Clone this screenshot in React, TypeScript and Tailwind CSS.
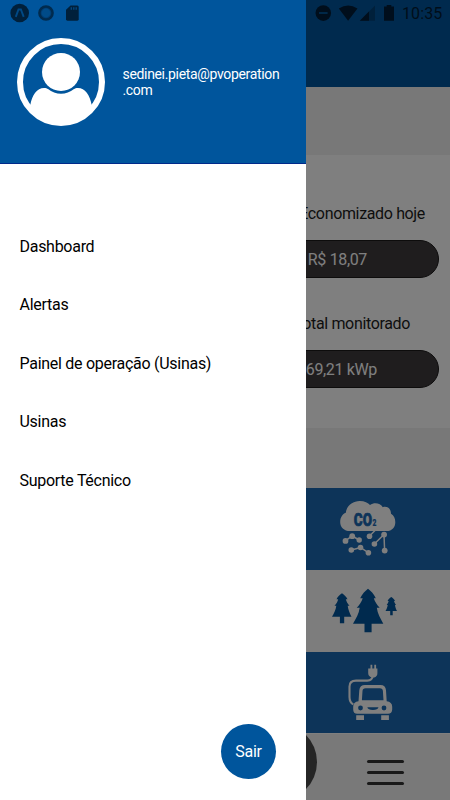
import React from 'react';

const menuItems = ['Dashboard', 'Alertas', 'Painel de operação (Usinas)', 'Usinas', 'Suporte Técnico'];

const stats = [
  { id: 'saved', label: 'Economizado hoje', value: 'R$ 18,07', labelPad: 'pr-[25px]', valuePad: 'pr-[71px]' },
  { id: 'total', label: 'Total monitorado', value: '69,21 kWp', labelPad: 'pr-[40px]', valuePad: 'pr-[61px]' },
];

const AvatarIcon: React.FC = () => (
  <svg width="88" height="88" viewBox="0 0 88 88" className="shrink-0">
    <circle cx="44" cy="44" r="41" fill="none" stroke="#fff" strokeWidth="6" />
    <circle cx="44" cy="34" r="19" fill="#fff" />
    <path d="M13.3 67C15 57 20 50 27 50C29 50 30 50.4 31 51.1C38.5 57.4 49.5 57.4 57 51.1C58 50.4 59 50 61 50C68 50 73 57 74.7 67C70 80 57 86 44 86S18 80 13.3 67Z" fill="#fff" />
  </svg>
);

const NotificationIcons: React.FC = () => (
  <svg width="90" height="26" viewBox="0 0 90 26" className="block">
    <circle cx="19.7" cy="13" r="9.3" fill="#00203b" />
    <path d="M15.8 16.9L18.5 9.5H20.9L23.7 16.9" fill="none" stroke="#004985" strokeWidth="1.9" />
    <circle cx="46" cy="13" r="6.6" fill="#003e73" stroke="#002b4e" strokeWidth="2.5" />
    <circle cx="46" cy="13" r="4.4" fill="#004b88" />
    <path d="M70.5 5.5H77.4Q78.7 5.5 78.7 7V19.3Q78.7 20.7 77.3 20.7H67.5Q66 20.7 66 19.3V9.8Z" fill="#00203b" />
    <path d="M71.3 7.2V9.7M73.8 7.2V9.7M76.2 7.2V9.7" stroke="#004985" strokeWidth="1.3" />
  </svg>
);

const SystemIcons: React.FC = () => (
  <svg width="82" height="26" viewBox="314 0 82 26" className="block">
    <circle cx="323.3" cy="13.1" r="7.8" fill="#001d38" />
    <rect x="319" y="12" width="8.6" height="2" fill="#005090" />
    <path d="M338.8 8.6Q348.2 2.2 357.5 8.6L348.1 20.7Z" fill="#001d38" />
    <path d="M375 5.5V20.7H359.8Z" fill="#004177" />
    <path d="M369 11.5V20.7H359.8Z" fill="#001d38" />
    <path d="M386.7 5H391.3V6.4H394V20.8H384V6.4H386.7Z" fill="#001d38" />
  </svg>
);

const CarbonIcon: React.FC = () => (
  <svg width="90" height="75" viewBox="0 0 90 75" className="block">
    <path d="M25 41C19 41 15.2 37.3 15.2 32.2C15.2 27.5 17.5 24 20.8 22.8C21.5 15.8 27.6 11 34.8 11C39.5 11 43.2 12.8 45 15C49.5 11.8 55.5 13.3 57.8 17.2C62.5 15.8 66 19 66 23.7C69 25.3 70.3 28.5 70.3 32.2C70.3 37.3 67.2 41 61.5 41Z" fill="#fff" />
    <text transform="translate(28.8 36.2) scale(.71 1)" fontFamily="Roboto, sans-serif" fontWeight="900" fill="#1a68b2" stroke="#1a68b2">
      <tspan fontSize="19" strokeWidth="0.7">CO</tspan>
      <tspan dx="0.8" fontSize="9.5" strokeWidth="0.2">2</tspan>
    </text>
    <g fill="none" stroke="#fff" strokeWidth="1.5">
      <path d="M20.3 50.8L27.2 46L34.2 50" />
      <path d="M26.5 60L35.5 57.5L43.3 62.7" />
      <path d="M44.5 46L50.5 40" />
      <path d="M49.3 54L59 44.5L59.6 60.5" />
    </g>
    <g fill="#fff">
      <circle cx="20.5" cy="50.9" r="2.9" />
      <circle cx="27.2" cy="46.2" r="2.9" />
      <circle cx="34.2" cy="50" r="2.7" />
      <circle cx="26.3" cy="60" r="2.8" />
      <circle cx="35.5" cy="57.5" r="2.8" />
      <circle cx="43.4" cy="62.8" r="2.8" />
      <circle cx="44.5" cy="46.2" r="2.8" />
      <circle cx="49.4" cy="54" r="2.8" />
      <circle cx="59.1" cy="44.6" r="2.9" />
      <circle cx="59.7" cy="60.6" r="2.9" />
    </g>
  </svg>
);

const TreesIcon: React.FC = () => (
  <svg width="90" height="70" viewBox="0 0 90 70" className="block" fill="#00559c">
    <path d="M43 13.7C45.5 15.5 49 19 50.8 23.2H48.8C49.7 26.8 52.3 30 54.7 32.8H51.8C52.5 38.5 55.5 43.5 58.3 48.7H46.6V57.3H39.5V48.7H28C31 43.5 34 38.5 34.7 32.8H31.7C34.3 30 36.8 26.8 37.7 23.2H35.2C37.2 19 40.5 15.5 43 13.7Z" />
    <path d="M17 18.2C19.2 19.5 21.5 22 22.5 24.3H20.8C21.5 27 22.7 28.8 24.5 30.8H22.7C23.2 35 24.8 38.5 26.5 41.7H19.2V48.3H14.9V41.7H7C9 38.5 10.8 35 11.3 30.8H9.5C11.4 28.8 12.6 27 13.2 24.3H11.5C12.5 22 14.6 19.5 17 18.2Z" />
    <path d="M66.3 22C67.8 23 69.3 24.4 70 26H69C69.3 27.5 70 28.8 71 30H70C70.3 32.3 71.1 34.2 72 36H67.7V40.3H65.2V36H60.5C61.5 34.2 62.4 32.3 62.7 30H61.7C62.7 28.8 63.4 27.5 63.7 26H62.6C63.3 24.4 64.7 23 66.3 22Z" />
  </svg>
);

const ElectricCarIcon: React.FC = () => (
  <svg width="90" height="75" viewBox="0 0 90 75" className="block">
    <path d="M45.5 9.8H47.3V13.4H49.3V9.8H51.1V13.4H52.4V18.3C52.4 20.8 51 22 49.2 22.5H46.9C45 22 43.2 20.8 43.2 18.3V13.4H45.5Z" fill="#fff" />
    <path d="M47.8 20.5C47.5 24.5 45.3 25.6 42.3 25.6H31C26.5 25.6 24.5 27.7 24.5 31.5V42C24.5 45.5 25.5 48 28.3 49.4" fill="none" stroke="#fff" strokeWidth="2.1" />
    <path fillRule="evenodd" d="M33.5 46.3L34.3 35.3C34.6 31.8 36.6 30 40 30H55.4C58.8 30 60.7 31.8 61 35.3L61.7 46.3C65.2 46.8 67.2 48.5 67.2 51.8V54.5C67.2 57.3 65.5 58.8 63 58.8H32.2C29.6 58.8 28.2 57.3 28.2 54.5V51.8C28.2 48.5 30 46.8 33.5 46.3ZM40.6 33.2C38.5 33.2 37.7 34 37.5 36L36.9 45.3H58.5L57.9 36C57.7 34 56.9 33.2 54.8 33.2Z" fill="#fff" />
    <g fill="#1a68b2">
      <circle cx="35.5" cy="53" r="2.4" />
      <circle cx="59" cy="53" r="2.4" />
      <path d="M42.3 52.3H53.5Q52.8 55 47.9 55T42.3 52.3Z" />
    </g>
    <path d="M31.2 60.3H39V65H31.2ZM56.2 60.3H63.9V65H56.2Z" fill="#fff" />
  </svg>
);

const Home: React.FC = () => (
  <main className="flex h-full w-full flex-col bg-white text-[#1c1c1c]">
    <header className="flex h-[87px] shrink-0 items-start justify-end bg-[#00559c] pr-[9px]">
      <div className="flex items-start gap-[6px]">
        <SystemIcons />
        <span className="mt-[4px] w-[39px] text-[16px] leading-[20px] tracking-[0.1px] text-[#001b34]">10:35</span>
      </div>
    </header>
    <div className="h-[68px] shrink-0 bg-[#f0f0f0]" />

    <section className="flex h-[273px] shrink-0 flex-col gap-[36px] pt-[49px]">
      {stats.map((stat) => (
        <div key={stat.id} className="flex flex-col gap-[16px]">
          <span className={`text-right text-base leading-[20px] tracking-[-0.35px] ${stat.labelPad}`}>{stat.label}</span>
          <div className="mr-[11px] ml-[231px] h-[38px] rounded-full border border-[#1a1819] bg-[#3e3a3c]">
            <p className={`mt-[9px] text-right text-base leading-[20px] tracking-[-0.35px] text-white ${stat.valuePad}`}>{stat.value}</p>
          </div>
        </div>
      ))}
    </section>

    <div className="h-[60px] shrink-0 bg-[#f0f0f0]" />
    <div className="flex h-[82px] shrink-0 justify-end bg-[#1a68b2] pt-[2px] pr-[35px]">
      <CarbonIcon />
    </div>
    <div className="flex h-[82px] shrink-0 justify-end bg-[#fafafa] pt-[5px] pr-[35px]">
      <TreesIcon />
    </div>
    <div className="flex h-[81px] shrink-0 justify-end bg-[#1a68b2] pt-[3px] pr-[35px]">
      <ElectricCarIcon />
    </div>

    <footer className="flex flex-1 items-start justify-end gap-[50px] border-t border-white bg-[#f2f2f2] pr-[46px]">
      <div className="-mt-[11px] size-[78px] rounded-full bg-[#4a4a4a]" />
      <div className="flex w-[37px] flex-col gap-[8px] pt-[26px]">
        <div className="h-[3px] rounded-full bg-[#333]" />
        <div className="h-[3px] rounded-full bg-[#333]" />
        <div className="h-[3px] rounded-full bg-[#333]" />
      </div>
    </footer>
  </main>
);

const Drawer: React.FC = () => (
  <aside className="absolute inset-y-0 left-0 flex w-[306px] flex-col bg-white">
    <div className="h-[164px] shrink-0 border-b border-[#00298a] bg-[#00559c]">
      <NotificationIcons />
      <div className="mt-[12px] flex items-start pl-[17px]">
        <AvatarIcon />
        <p className="mt-[28px] ml-[17.5px] text-sm leading-[16px] tracking-[-0.33px] text-white">
          sedinei.pieta@pvoperation
          <br />
          .com
        </p>
      </div>
    </div>

    <nav className="flex flex-col gap-[38.5px] pt-[72.6px] pl-[19.5px]">
      {menuItems.map((item) => (
        <a key={item} className="text-base leading-[20px] tracking-[-0.28px] text-black">
          {item}
        </a>
      ))}
    </nav>

    <button className="mt-auto mr-[30px] mb-[21px] size-[55px] self-end rounded-full bg-[#00559c] text-base tracking-[-0.3px] text-white">
      Sair
    </button>
  </aside>
);

const App: React.FC = () => {
  return (
    <div className="relative h-[800px] w-[450px] overflow-hidden font-['Roboto',sans-serif]">
      <Home />
      <div className="absolute inset-0 bg-black/50" />
      <Drawer />
    </div>
  );
};

export default App;
